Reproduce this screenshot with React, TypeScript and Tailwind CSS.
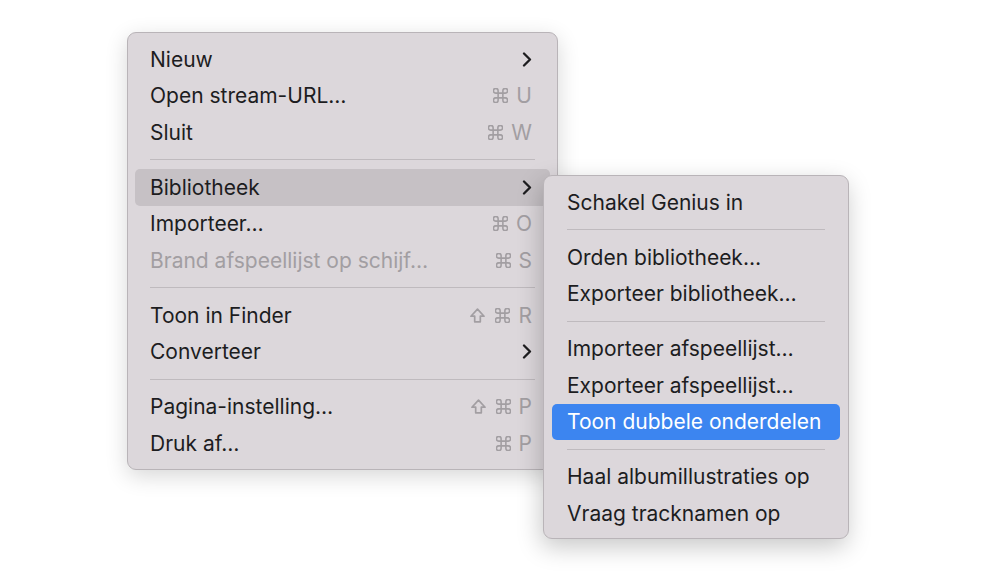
import React from 'react';

type Item =
  | { sep: true }
  | {
      sep?: false;
      label: string;
      shortcut?: string[];
      submenu?: boolean;
      disabled?: boolean;
      active?: 'gray' | 'blue';
    };

const mainItems: Item[] = [
  { label: 'Nieuw', submenu: true },
  { label: 'Open stream-URL…', shortcut: ['cmd', 'U'] },
  { label: 'Sluit', shortcut: ['cmd', 'W'] },
  { sep: true },
  { label: 'Bibliotheek', submenu: true, active: 'gray' },
  { label: 'Importeer…', shortcut: ['cmd', 'O'] },
  { label: 'Brand afspeellijst op schijf…', shortcut: ['cmd', 'S'], disabled: true },
  { sep: true },
  { label: 'Toon in Finder', shortcut: ['shift', 'cmd', 'R'] },
  { label: 'Converteer', submenu: true },
  { sep: true },
  { label: 'Pagina-instelling…', shortcut: ['shift', 'cmd', 'P'] },
  { label: 'Druk af…', shortcut: ['cmd', 'P'] },
];

const subItems: Item[] = [
  { label: 'Schakel Genius in' },
  { sep: true },
  { label: 'Orden bibliotheek…' },
  { label: 'Exporteer bibliotheek…' },
  { sep: true },
  { label: 'Importeer afspeellijst…' },
  { label: 'Exporteer afspeellijst…' },
  { label: 'Toon dubbele onderdelen', active: 'blue' },
  { sep: true },
  { label: 'Haal albumillustraties op' },
  { label: 'Vraag tracknamen op' },
];

function Chevron() {
  return (
    <svg width="10" height="15" viewBox="0 0 10 15" className="text-[#1d1d1f]">
      <polyline points="2,1.5 8,7.5 2,13.5" fill="none" stroke="currentColor" strokeWidth="2.3" strokeLinecap="round" strokeLinejoin="round" />
    </svg>
  );
}

function CmdKey() {
  return (
    <svg width="15" height="15" viewBox="2.5 2.5 19 19" className="mr-[8px]">
      <path
        d="M15 6v12a3 3 0 1 0 3-3H6a3 3 0 1 0 3 3V6a3 3 0 1 0-3 3h12a3 3 0 1 0-3-3"
        fill="none"
        stroke="currentColor"
        strokeWidth="2"
        strokeLinecap="round"
        strokeLinejoin="round"
      />
    </svg>
  );
}

function ShiftKey() {
  return (
    <svg width="15" height="15" viewBox="4 4 16 15.5" className="mr-[10px]">
      <path d="M9 18.5v-6H5l7-7.5 7 7.5h-4v6H9z" fill="none" stroke="currentColor" strokeWidth="1.8" strokeLinejoin="round" />
    </svg>
  );
}

function Menu({ items }: { items: Item[] }) {
  return (
    <div className="flex flex-col">
      {items.map((item, i) => {
        if (item.sep) {
          return (
            <div key={i} className="h-[18.5px] flex items-center px-[15px]">
              <div className="h-px w-full bg-[#bfbabe]" />
            </div>
          );
        }
        const rowBg =
          item.active === 'gray' ? 'bg-[#c6c1c5]' : item.active === 'blue' ? 'bg-[#3c85f0]' : '';
        const textColor = item.active === 'blue' ? 'text-white' : item.disabled ? 'text-[#a29ea2]' : 'text-[#1d1d1f]';
        return (
          <div key={i} className={`h-[36.5px] flex items-center justify-between pl-[15px] pr-[18px] rounded-[5px] ${rowBg}`}>
            <span className={`whitespace-nowrap text-[21px] ${textColor}`}>{item.label}</span>
            {item.submenu && <Chevron />}
            {item.shortcut && (
              <span className="flex items-center text-[21px] text-[#a29ea2]">
                {item.shortcut.map((k, j) =>
                  k === 'cmd' ? <CmdKey key={j} /> : k === 'shift' ? <ShiftKey key={j} /> : <span key={j}>{k}</span>
                )}
              </span>
            )}
          </div>
        );
      })}
    </div>
  );
}

export default function App() {
  return (
    <div className="relative w-[1000px] h-[578px] bg-white overflow-hidden font-['Inter',_sans-serif]">
      <div className="ml-[127px] mt-[32px] w-[431px] h-[438px] rounded-[9px] border border-[#b9b4b8] bg-[#dcd7db] shadow-[0_6px_22px_rgba(0,0,0,0.16)] px-[7px] pt-[8px] pb-[7px]">
        <Menu items={mainItems} />
      </div>
      <div className="absolute left-[543px] top-[175px] w-[306px] h-[364px] rounded-[9px] border border-[#b9b4b8] bg-[#dcd7db] shadow-[-2px_8px_24px_rgba(0,0,0,0.22)] px-[8px] pt-[8px] pb-[7px]">
        <Menu items={subItems} />
      </div>
    </div>
  );
}
